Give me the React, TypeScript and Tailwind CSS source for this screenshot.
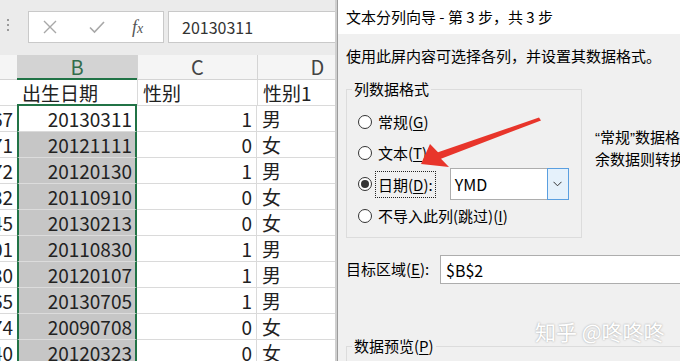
import React from 'react'

const ROWS = [
  { id: '2013010167', date: '20130311', g: '1', s: '男' },
  { id: '2013010171', date: '20121111', g: '0', s: '女' },
  { id: '2013010172', date: '20120130', g: '1', s: '男' },
  { id: '2013010132', date: '20110910', g: '0', s: '女' },
  { id: '2013010145', date: '20130213', g: '0', s: '女' },
  { id: '2013010101', date: '20110830', g: '1', s: '男' },
  { id: '2013010130', date: '20120107', g: '1', s: '男' },
  { id: '2013010165', date: '20130705', g: '1', s: '男' },
  { id: '2013010174', date: '20090708', g: '0', s: '女' },
  { id: '2013010140', date: '20120323', g: '0', s: '女' },
]

// Column A is mostly hidden behind the frame; flex-end lets the number spill off the left edge.
function ColA({ children }: { children?: React.ReactNode }) {
  return (
    <div className="flex h-full w-[17px] shrink-0 justify-end overflow-hidden border-b border-[#dadada] pr-[4px]">
      <span className="shrink-0 whitespace-nowrap">{children}</span>
    </div>
  )
}

function Sheet() {
  return (
    <div className="w-[335px] shrink-0 overflow-hidden bg-white font-['Noto_Sans_CJK_SC',sans-serif] text-[19px] text-[#222]">
      {/* formula bar */}
      <div className="flex h-[55px] items-start bg-[#ebebeb] pt-[11px]">
        <div className="flex w-[28px] shrink-0 flex-col gap-[3px] pl-[7px] pt-[8px]">
          <span className="h-[2px] w-[2px] bg-[#9a9a9a]" />
          <span className="h-[2px] w-[2px] bg-[#9a9a9a]" />
          <span className="h-[2px] w-[2px] bg-[#9a9a9a]" />
        </div>
        <div className="flex h-[32px] w-[136px] shrink-0 items-center border border-[#c9c9c9] bg-white">
          <svg className="ml-[14px]" width="14" height="14" viewBox="0 0 14 14">
            <path d="M1 1 L13 13 M13 1 L1 13" stroke="#a8a8a8" strokeWidth="1.4" fill="none" />
          </svg>
          <svg className="ml-[32px]" width="16" height="14" viewBox="0 0 16 14">
            <path d="M1 7.5 L5.5 12 L15 2" stroke="#a8a8a8" strokeWidth="1.6" fill="none" />
          </svg>
          <span className="ml-[27px] font-['Liberation_Serif',serif] text-[18px] italic leading-none text-[#555]">
            f<span className="text-[14px]">x</span>
          </span>
        </div>
        <div className="ml-[4px] flex h-[32px] w-[240px] shrink-0 items-center border border-[#c9c9c9] bg-white pl-[13px] text-[16px] text-[#333]">
          20130311
        </div>
      </div>

      {/* column letters */}
      <div className="flex h-[25px] bg-[#f5f5f5] text-[20px] leading-[24px] text-[#444]">
        <div className="w-[17px] shrink-0 border-b border-[#d4d4d4]" />
        <div className="w-[120px] shrink-0 border-b-2 border-[#217346] bg-[#d3d3d3] text-center text-[#336d4b]">B</div>
        <div className="w-[120px] shrink-0 border-b border-l border-[#d4d4d4] text-center">C</div>
        <div className="w-[120px] shrink-0 border-b border-l border-[#d4d4d4] text-center">D</div>
      </div>

      {/* header row */}
      <div className="flex h-[26px] leading-[25px]">
        <ColA />
        <div className="w-[120px] shrink-0 border-b-2 border-[#217346] pl-[5px]">出生日期</div>
        <div className="w-[120px] shrink-0 border-b border-l border-[#dadada] pl-[5px]">性别</div>
        <div className="w-[120px] shrink-0 border-b border-l border-[#dadada] pl-[5px]">性别1</div>
      </div>

      {ROWS.map((r, i) => (
        <div key={r.date} className="flex h-[26px] leading-[25px]">
          <ColA>{r.id}</ColA>
          <div
            className={
              'w-[120px] shrink-0 border-x-2 border-b border-x-[#217346] pr-[3px] text-right ' +
              (i === 0 ? 'border-b-[#dadada] bg-white' : 'border-b-[#dcdcdc] bg-[#c6c6c6]')
            }
          >
            {r.date}
          </div>
          <div className="w-[120px] shrink-0 border-b border-r border-[#dadada] pr-[4px] text-right">{r.g}</div>
          <div className="w-[120px] shrink-0 border-b border-[#dadada] pl-[5px]">{r.s}</div>
        </div>
      ))}
    </div>
  )
}

function Radio({ checked }: { checked?: boolean }) {
  return (
    <span className="flex h-[14px] w-[14px] shrink-0 items-center justify-center rounded-full border border-[#333] bg-white">
      {checked && <span className="h-[8px] w-[8px] rounded-full bg-[#333]" />}
    </span>
  )
}

function Key({ k }: { k: string }) {
  return <span className="underline underline-offset-[2px]">{k}</span>
}

// Windows draws the curly quotes half-width; the CJK font would make them full-width.
function Q({ c }: { c: string }) {
  return <span className="font-['Liberation_Sans',sans-serif]">{c}</span>
}

function Option({ checked, focus, children }: { checked?: boolean; focus?: boolean; children: React.ReactNode }) {
  return (
    <div className="flex items-center gap-[3px]">
      <Radio checked={checked} />
      <span
        className={
          'border px-[2px] leading-[25px] whitespace-nowrap ' +
          (focus ? 'border-dotted border-[#222]' : 'border-transparent')
        }
      >
        {children}
      </span>
    </div>
  )
}

function Dialog() {
  return (
    <div className="relative flex min-w-0 flex-1 flex-col overflow-hidden border-l border-[#9c9c9c] bg-[#f0f0f0] font-['Noto_Sans_CJK_SC',sans-serif] text-[15px] text-black">
      <div className="h-[34px] shrink-0 bg-white pl-[8px] leading-[34px] whitespace-nowrap">
        文本分列向导 - 第 3 步，共 3 步
      </div>

      <div className="flex flex-col pl-[8px]">
        <div className="mt-[12px] leading-[20px] whitespace-nowrap">使用此屏内容可选择各列，并设置其数据格式。</div>

        <div className="mt-[13px] flex items-start">
          <fieldset className="w-[236px] shrink-0 border border-[#dcdcdc] pb-[6px] pl-[5px]">
            <legend className="px-[2px] leading-[20px]">列数据格式</legend>
            <div className="ml-[6px] mt-[7px] flex flex-col">
              <div className="flex h-[31px] items-center">
                <Option>常规(<Key k="G" />)</Option>
              </div>
              <div className="flex h-[31px] items-center">
                <Option>文本(<Key k="T" />)</Option>
              </div>
              <div className="flex h-[32px] items-center">
                <Option checked focus>日期(<Key k="D" />):</Option>
                <div className="ml-[14px] flex h-[32px] w-[119px] items-center border border-[#adadad] bg-white">
                  <span className="pl-[4px] text-[16px]">YMD</span>
                  <div className="-my-px -mr-px ml-auto flex h-[32px] w-[22px] items-center justify-center border border-[#5a9fe0] bg-[#e5f1fb]">
                    <svg width="9" height="6" viewBox="0 0 9 6">
                      <path d="M0.5 0.8 L4.5 4.8 L8.5 0.8" stroke="#333" strokeWidth="1" fill="none" />
                    </svg>
                  </div>
                </div>
              </div>
              <div className="flex h-[31px] items-center">
                <Option>不导入此列(跳过)(<Key k="I" />)</Option>
              </div>
            </div>
          </fieldset>
          <div className="ml-[13px] mt-[47px] leading-[21px] whitespace-nowrap">
            <div>
              <Q c="“" />常规<Q c="”" />数据格式将数值转换成数字，日期值会转换成日期，其
            </div>
            <div>余数据则转换成文本。</div>
          </div>
        </div>

        <div className="mt-[17px] flex h-[29px] items-center">
          <span className="w-[94px] shrink-0 whitespace-nowrap">目标区域(<Key k="E" />):</span>
          <div className="flex h-[29px] w-[300px] shrink-0 items-center border border-[#adadad] bg-white pl-[5px] text-[16px]">
            $B$2
          </div>
        </div>

        <fieldset className="mt-[52px] h-[60px] w-[400px] shrink-0 border-l border-t border-[#dcdcdc] pl-[5px]">
          <legend className="px-[2px] leading-[20px]">数据预览(<Key k="P" />)</legend>
        </fieldset>
      </div>

      <div className="absolute left-[197px] top-[319px] whitespace-nowrap text-[21px] leading-[24px] text-white [text-shadow:0_0_2px_rgba(0,0,0,0.35)]">
        知乎 @咚咚咚
      </div>
    </div>
  )
}

function Arrow() {
  return (
    <svg className="pointer-events-none absolute left-0 top-0" width="680" height="361" viewBox="0 0 680 361">
      <polygon
        points="539,117.5 541,120.5 441,158.7 449,167 421,164 430,144 438,152.3"
        fill="#e8352b"
      />
    </svg>
  )
}

export default function App() {
  return (
    <div className="relative flex h-[361px] w-[680px] overflow-hidden bg-white">
      <Sheet />
      <div className="w-[2px] shrink-0 bg-[#cfcfcf]" />
      <Dialog />
      <Arrow />
    </div>
  )
}
